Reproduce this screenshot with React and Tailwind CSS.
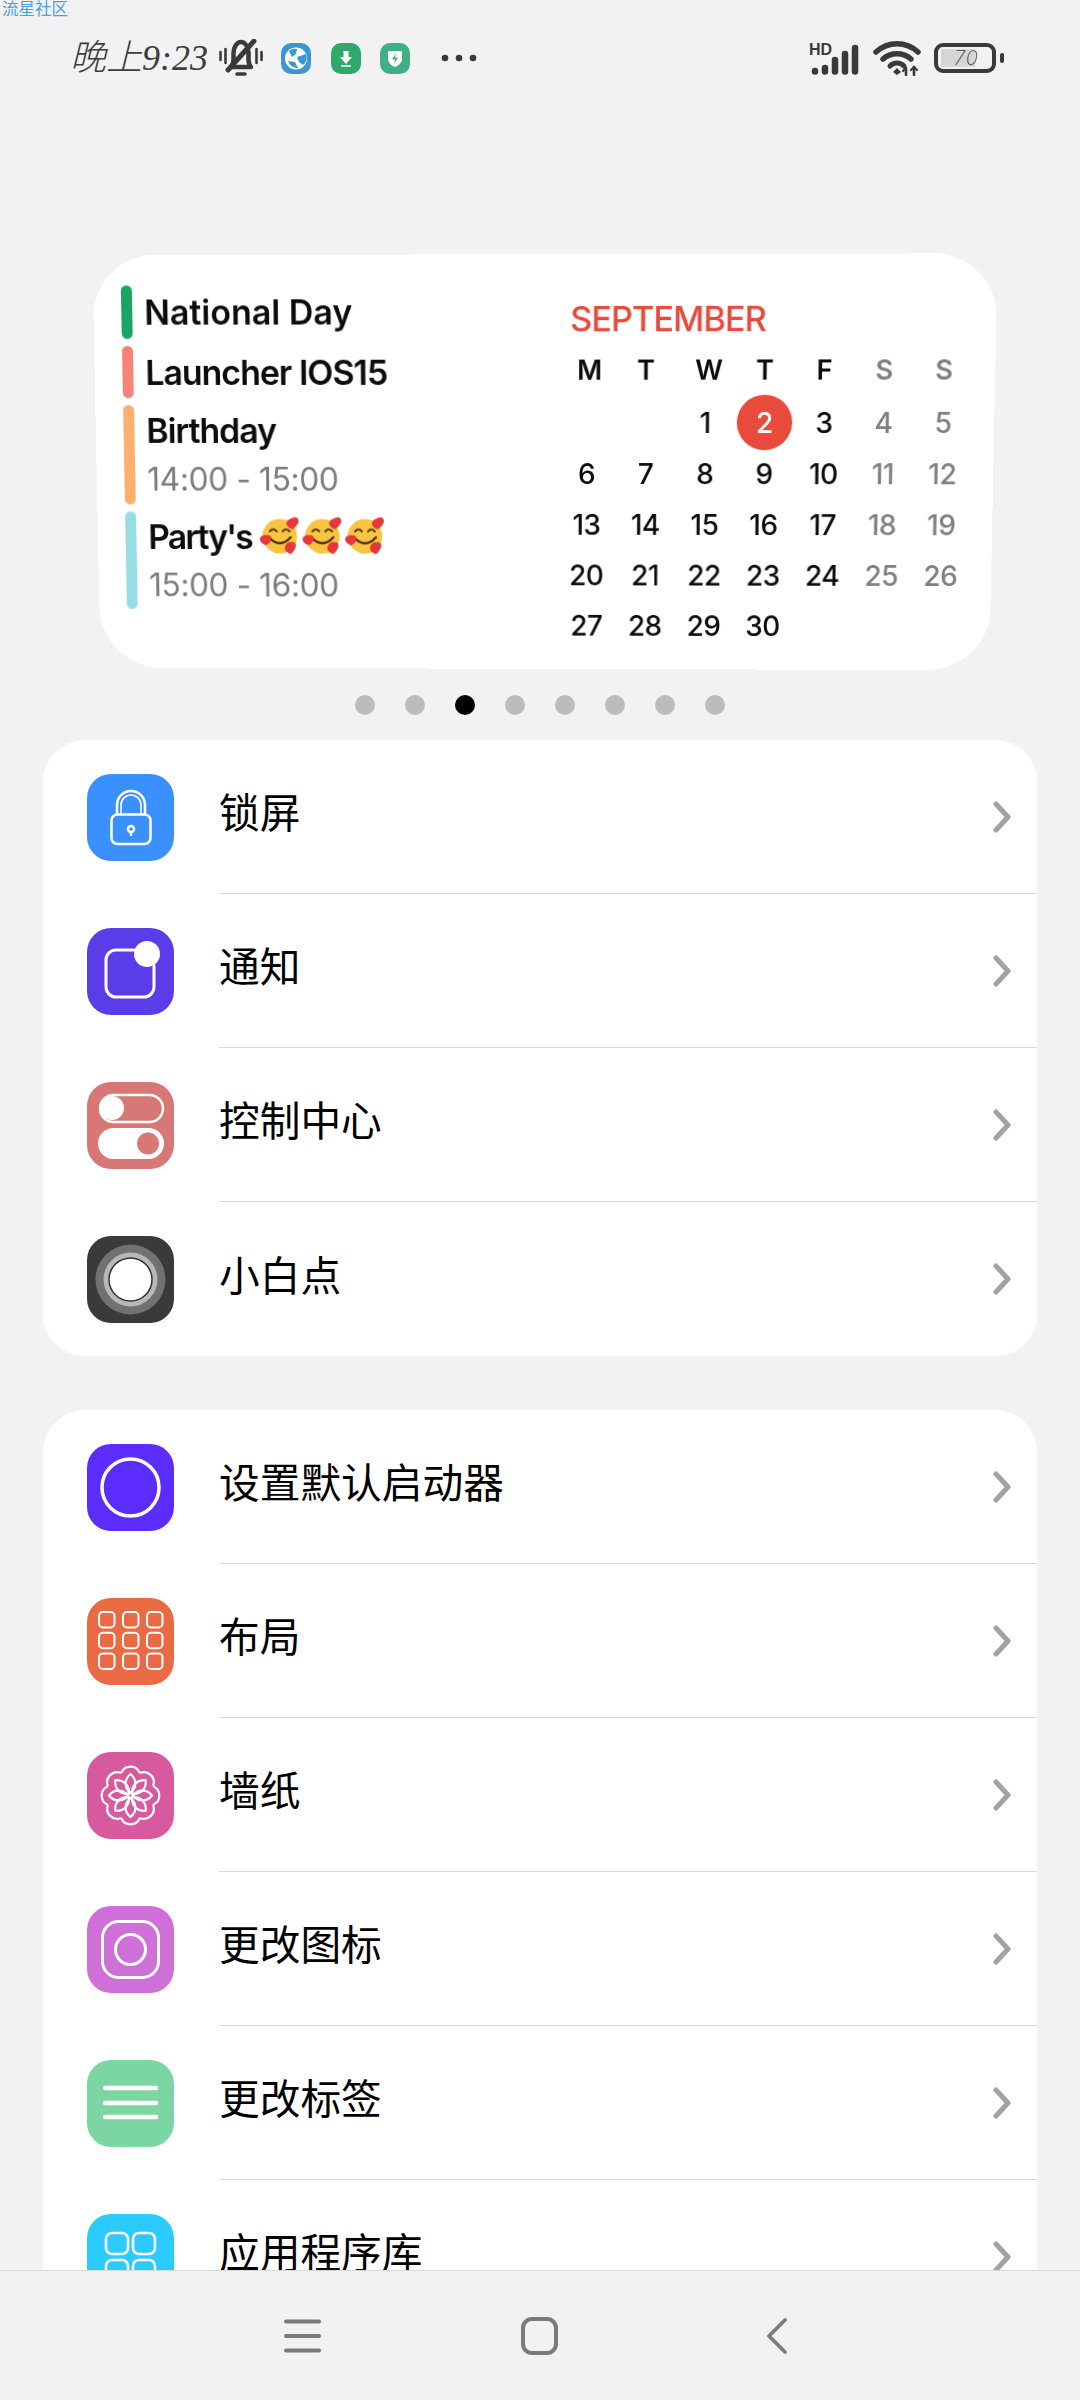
import React from 'react';

const CJK = "font-['Noto_Sans_CJK_SC',sans-serif]";

const Chevron = () => (
  <svg width="20" height="32" viewBox="0 0 20 32" fill="none" stroke="#a2a2a2" strokeWidth="5" strokeLinecap="round" strokeLinejoin="round">
    <path d="M3 3 L15 16 L3 29" />
  </svg>
);

const Glyph = ({ bg, children }) => (
  <svg width="87" height="87" viewBox="0 0 87 87" fill="none" stroke="#fff" className="block">
    <rect width="87" height="87" rx="24" fill={bg} stroke="none" />
    {children}
  </svg>
);

const LockIcon = () => (
  <Glyph bg="#3a90fe">
    <g strokeWidth="2.5">
      <rect x="24.5" y="40.5" width="39" height="29.5" rx="6" />
      <path d="M30 40 V31 a14 14 0 0 1 28 0 V40" />
      <path d="M34 40 V31 a10 10 0 0 1 20 0 V40" strokeWidth="1.6" />
      <circle cx="44" cy="55" r="3" />
      <path d="M44 58 V62" />
    </g>
  </Glyph>
);

const NotifyIcon = () => (
  <Glyph bg="#5a3de8">
    <path d="M47 22 H29 a10 10 0 0 0 -10 10 V59 a10 10 0 0 0 10 10 H57 a10 10 0 0 0 10 -10 V38" strokeWidth="3" strokeLinecap="round" />
    <circle cx="60" cy="26" r="13" fill="#fff" stroke="none" />
  </Glyph>
);

const ToggleIcon = () => (
  <Glyph bg="#d87876">
    <rect x="13" y="13" width="63" height="27" rx="13.5" strokeWidth="2.5" />
    <circle cx="25" cy="26" r="12" fill="#fff" stroke="none" />
    <rect x="11" y="46" width="66" height="31" rx="15.5" fill="#fff" stroke="none" />
    <circle cx="61" cy="61.5" r="11" fill="#d87876" stroke="none" />
  </Glyph>
);

const DotIcon = () => (
  <Glyph bg="#3a3a3a">
    <circle cx="43.5" cy="43.5" r="35" fill="#717171" stroke="none" />
    <circle cx="43.5" cy="43.5" r="27" fill="#b8b8b8" stroke="none" />
    <circle cx="43.5" cy="43.5" r="21.5" fill="#fff" stroke="#333" strokeWidth="1.5" />
  </Glyph>
);

const RingIcon = () => (
  <Glyph bg="#5b2cfb">
    <circle cx="43.5" cy="43.5" r="28.5" strokeWidth="3.5" />
  </Glyph>
);

const GridIcon = () => (
  <Glyph bg="#e96a43">
    <g strokeWidth="2">
      {[14, 34.7, 55.4].map(y => [12, 36, 60].map(x => (
        <rect key={`${x}-${y}`} x={x} y={y} width="15.5" height="15.5" rx="4" />
      )))}
    </g>
  </Glyph>
);

const FlowerIcon = () => (
  <Glyph bg="#d75a9f">
    <g strokeWidth="2.2">
      {[0, 45, 90, 135, 180, 225, 270, 315].map(a => (
        <g key={a} transform={`rotate(${a} 43.5 43.5)`}>
          <path d="M43.5 41 C37 36 37 27 43.5 22 C50 27 50 36 43.5 41 Z" />
          <path d="M34.2 21 A10 10 0 0 1 52.8 21" />
        </g>
      ))}
      <circle cx="43.5" cy="43.5" r="2.5" />
    </g>
  </Glyph>
);

const InstaIcon = () => (
  <Glyph bg="#cf6fd8">
    <rect x="15.5" y="15.5" width="56" height="56" rx="16" strokeWidth="3" />
    <circle cx="43.5" cy="43.5" r="15" strokeWidth="3" />
  </Glyph>
);

const LinesIcon = () => (
  <Glyph bg="#7bd6a3">
    <path d="M18 28 H69 M18 43 H69 M18 57 H69" strokeWidth="4.5" strokeLinecap="round" />
  </Glyph>
);

const AppsIcon = () => (
  <Glyph bg="#2ccbff">
    <g strokeWidth="2.5">
      <rect x="19" y="19" width="22" height="21" rx="6" />
      <rect x="46" y="19" width="22" height="21" rx="6" />
      <rect x="19" y="46" width="22" height="21" rx="6" />
      <rect x="46" y="46" width="22" height="21" rx="6" />
    </g>
  </Glyph>
);

const Row = ({ icon: Icon, label, last }) => (
  <div className="flex h-[154px]">
    <div className="w-[176px] pl-[44px] flex items-center">
      <Icon />
    </div>
    <div className={`flex-1 flex items-center justify-between pr-[24px] ${last ? '' : 'border-b border-[#d9d9d9]'}`}>
      <span className={`mb-[10px] text-[40.7px] leading-none text-black ${CJK}`}>{label}</span>
      <Chevron />
    </div>
  </div>
);

const Emoji = () => (
  <svg width="42" height="40" viewBox="0 0 42 40" className="block">
    <circle cx="20" cy="20" r="17.5" fill="#f9c440" />
    <path d="M10 15 q3.5 -4 7 0 M23 15 q3.5 -4 7 0" fill="none" stroke="#5b3a1a" strokeWidth="2" strokeLinecap="round" />
    <path d="M9 21 Q20 33 31 21" fill="none" stroke="#4a2c12" strokeWidth="2.4" strokeLinecap="round" />
    <path d="M34 1 c3 -1 6 1 5 5 c-1 3 -4 5 -6 7 c-3 -1 -6 -3 -6 -6 c0 -4 5 -5 7 -6z" fill="#e5383b" />
    <path d="M7 19 c3 -1 5 2 4 5 c-1 3 -3 4 -5 5 c-3 -1 -6 -3 -6 -6 c0 -3 4 -5 7 -4z" fill="#e5383b" />
    <path d="M32 26 c3 -1 5 2 4 5 c-1 3 -3 5 -5 7 c-3 -1 -6 -3 -6 -6 c0 -4 4 -7 7 -6z" fill="#e5383b" />
  </svg>
);

const events = [
  { color: '#1aa566', title: 'National Day', h: 'h-[53px]', track: 'tracking-[0px]' },
  { color: '#f98378', title: 'Launcher IOS15', h: 'h-[52px]', track: 'tracking-[-1px]' },
  { color: '#fbb06f', title: 'Birthday', time: '14:00 - 15:00', h: 'h-[100px]', track: 'tracking-[-1px]' },
  { color: '#97dde5', title: "Party's", time: '15:00 - 16:00', emoji: true, h: 'h-[99px]', track: 'tracking-[-1.8px]' },
];

const Event = ({ color, title, time, emoji, h, track }) => (
  <div className={`flex gap-[12px] ${h}`}>
    <div className="w-[11px] rounded-full" style={{ backgroundColor: color }} />
    <div className="flex flex-col">
      <div className={`flex items-center text-[34px] font-semibold text-[#0c0c0c] ${track} ${time ? 'h-[50px]' : 'h-full'}`}>
        {title}
        {emoji && (
          <span className="flex ml-[8px] gap-[1px]">
            <Emoji /><Emoji /><Emoji />
          </span>
        )}
      </div>
      {time && <div className="h-[50px] flex items-center text-[32px] text-[#7c7c7c] tracking-[-0.4px]">{time}</div>}
    </div>
  </div>
);

const weeks = [
  ['', '', '1', '2', '3', '4', '5'],
  ['6', '7', '8', '9', '10', '11', '12'],
  ['13', '14', '15', '16', '17', '18', '19'],
  ['20', '21', '22', '23', '24', '25', '26'],
  ['27', '28', '29', '30', '', '', ''],
];

// header letters sit a little off the number columns in the picture
const headers = [
  { d: 'M', pad: 'pl-[6px]' },
  { d: 'T', pad: '' },
  { d: 'W', pad: 'pl-[7px]' },
  { d: 'T', pad: '' },
  { d: 'F', pad: '' },
  { d: 'S', pad: '' },
  { d: 'S', pad: '' },
];

const Calendar = () => (
  <div className="w-[413px] pt-[43px]">
    <div className="pl-[13px] h-[40px] flex items-center text-[34px] font-medium text-[#e84a3c] tracking-[-1px]">SEPTEMBER</div>
    <div className="grid grid-cols-[repeat(7,59px)] mt-[7px]">
      {headers.map(({ d, pad }, i) => (
        <div key={i} className={`h-[51px] flex items-center justify-center text-[27px] font-semibold ${pad} ${i > 4 ? 'text-[#808080]' : 'text-[#0c0c0c]'}`}>{d}</div>
      ))}
      {weeks.flat().map((d, i) => (
        <div key={i} className={`h-[51px] flex items-center justify-center text-[28px] font-medium tracking-[-0.5px] ${i % 7 > 4 ? 'text-[#808080]' : 'text-[#0c0c0c]'}`}>
          {d === '2'
            ? <span className="w-[55px] h-[55px] shrink-0 rounded-full bg-[#e84a3c] text-white flex items-center justify-center">2</span>
            : d}
        </div>
      ))}
    </div>
  </div>
);

const Widget = () => (
  <div className="ml-[94px] w-[897px] h-[415px] mt-[140px] bg-white rounded-[62px] flex font-['Inter',sans-serif] [transform:perspective(1000px)_rotateX(-2.6deg)_rotateY(-0.7deg)]">
    <div className="w-[463px] shrink-0 pl-[28px] pt-[30px] flex flex-col gap-[7px]">
      {events.map(e => <Event key={e.title} {...e} />)}
    </div>
    <Calendar />
  </div>
);

const StatusBar = () => (
  <div className="relative h-[116px] pl-[70px] pr-[84px] flex items-center justify-between">
    <span className={`absolute left-[2px] top-0 text-[16.5px] leading-[17px] text-[#4a9fe0] ${CJK}`}>流星社区</span>
    <div className="flex items-center">
      <span className={`w-[149px] text-[36px] font-light italic text-[#3c3c3c] font-['Liberation_Serif','Noto_Sans_CJK_SC',serif]`}>晚上9:23</span>
      <svg width="44" height="38" viewBox="0 0 44 38" fill="none" stroke="#3a3a3a" className="block">
        <path d="M1.5 13 V21 M6.5 10 V24 M37.5 10 V24 M42.5 13 V21" strokeWidth="2.6" strokeLinecap="round" />
        <path d="M12 28 C14 26 14.5 24 14.5 20 V14 C14.5 8 18 3 22 3 C26 3 29.5 8 29.5 14 V20 C29.5 24 30 26 32 28 Z" strokeWidth="4.5" strokeLinejoin="round" />
        <path d="M35 2 L9 31" strokeWidth="5" strokeLinecap="round" />
        <path d="M18 35 H26" strokeWidth="3.5" strokeLinecap="round" />
      </svg>
      <svg width="30" height="31" viewBox="0 0 30 31" className="block ml-[18px]">
        <rect width="30" height="31" rx="10" fill="#3a97d4" />
        <circle cx="15" cy="15.5" r="11" fill="#fff" />
        <path d="M8 8 a10 10 0 0 1 8 -2 l-1 5 l-4 3 z M16 14 l9 -3 a10 10 0 0 1 -3 11 l-4 -3 z M7 18 l7 1 l3 6 a10 10 0 0 1 -10 -7 z" fill="#3a97d4" />
      </svg>
      <svg width="30" height="31" viewBox="0 0 30 31" className="block ml-[20px]">
        <rect width="30" height="31" rx="10" fill="#2fa86c" />
        <path d="M12.5 8 H17.5 V14 H21 L15 21 L9 14 H12.5 Z" fill="#fff" />
        <path d="M10 23 H20" stroke="#fff" strokeWidth="1.5" />
      </svg>
      <svg width="30" height="31" viewBox="0 0 30 31" className="block ml-[19px]">
        <rect width="30" height="31" rx="10" fill="#3fb085" />
        <path d="M8 8 H22 V16 C22 20 18 23 15 24 C12 23 8 20 8 16 Z" fill="#fff" />
        <path d="M16 10 L12 16.5 H15 L14 21 L18 14.5 H15 Z" fill="#3fb085" />
      </svg>
      <svg width="36" height="8" viewBox="0 0 36 8" className="block ml-[31px]" fill="#3a3a3a">
        <circle cx="4" cy="4" r="3.3" /><circle cx="18" cy="4" r="3.3" /><circle cx="32" cy="4" r="3.3" />
      </svg>
    </div>
    <div className="flex items-center">
      <svg width="52" height="34" viewBox="0 0 52 34" className="block">
        <text x="0" y="14" fontFamily="Liberation Sans" fontWeight="700" fontSize="16" fill="#3a3a3a">HD</text>
        <g stroke="#3a3a3a" strokeWidth="6.5" strokeLinecap="round">
          <path d="M6 30 V30.5" /><path d="M16 27 V30.5" /><path d="M26 19 V30.5" /><path d="M36 13 V30.5" /><path d="M46 7 V30.5" />
        </g>
      </svg>
      <svg width="48" height="36" viewBox="0 0 48 36" fill="none" stroke="#3a3a3a" className="block ml-[12px]" strokeLinecap="round">
        <path d="M3 12 C15 1 33 1 45 12" strokeWidth="5.5" />
        <path d="M10 19 C18 12 30 12 38 19" strokeWidth="5.5" />
        <path d="M17 26 C21 22 27 22 31 26" strokeWidth="5" />
        <path d="M24 28 L28 32 L24 35 L20 32 Z" fill="#3a3a3a" stroke="none" />
        <path d="M33 28 V35 M41 27 V35" strokeWidth="2.6" />
        <path d="M30 31 L33 28 M38 30 L41 27 L44 30" strokeWidth="2.2" />
      </svg>
      <div className="relative ml-[13px] w-[62px] h-[30px] rounded-[9px] border-[4px] border-[#3a3a3a] flex items-center pl-[3px]">
        <div className="w-[34px] h-[18px] bg-[#d6d6d6] flex items-center pl-[13px]">
          <span className="text-[20px] leading-none font-extralight italic text-[#444] font-['Inter',sans-serif] tracking-[1px] whitespace-nowrap">70</span>
        </div>
        <div className="absolute -right-[12px] w-[4px] h-[10px] rounded-full bg-[#3a3a3a]" />
      </div>
    </div>
  </div>
);

const Dots = () => (
  <div className="flex justify-center gap-[30px] mt-[24px]">
    {[0, 1, 2, 3, 4, 5, 6, 7].map(i => (
      <div key={i} className={`w-[20px] h-[20px] rounded-full ${i === 2 ? 'bg-black' : 'bg-[#bcbcbc]'}`} />
    ))}
  </div>
);

const NavBar = () => (
  <div className="h-[130px] shrink-0 border-t border-[#d9d9d9] bg-[#f1f1f1] flex items-center pl-[284px]">
    <svg width="37" height="34" viewBox="0 0 37 34" className="block" stroke="#7a7a7a" strokeWidth="4" strokeLinecap="round">
      <path d="M2 2.5 H35 M2 17 H35 M2 31.5 H35" />
    </svg>
    <svg width="37" height="38" viewBox="0 0 37 38" fill="none" className="block ml-[200px]" stroke="#7a7a7a" strokeWidth="4">
      <rect x="2" y="2" width="33" height="34" rx="9" />
    </svg>
    <svg width="20" height="36" viewBox="0 0 20 36" fill="none" className="block ml-[209px]" stroke="#7a7a7a" strokeWidth="3.6" strokeLinecap="round" strokeLinejoin="round">
      <path d="M18 2 L2 18 L18 34" />
    </svg>
  </div>
);

const App = () => {
  return (
    <div className="w-[1080px] h-[2400px] bg-[#f2f2f2] flex flex-col overflow-hidden">
      <div className="flex-1 overflow-hidden">
        <StatusBar />
        <Widget />
        <Dots />
        <div className="mx-[43px] mt-[25px] bg-white rounded-[42px]">
          <Row icon={LockIcon} label="锁屏" />
          <Row icon={NotifyIcon} label="通知" />
          <Row icon={ToggleIcon} label="控制中心" />
          <Row icon={DotIcon} label="小白点" last />
        </div>
        <div className="mx-[43px] mt-[54px] bg-white rounded-[42px]">
          <Row icon={RingIcon} label="设置默认启动器" />
          <Row icon={GridIcon} label="布局" />
          <Row icon={FlowerIcon} label="墙纸" />
          <Row icon={InstaIcon} label="更改图标" />
          <Row icon={LinesIcon} label="更改标签" />
          <Row icon={AppsIcon} label="应用程序库" />
        </div>
      </div>
      <NavBar />
    </div>
  );
};

export default App;
